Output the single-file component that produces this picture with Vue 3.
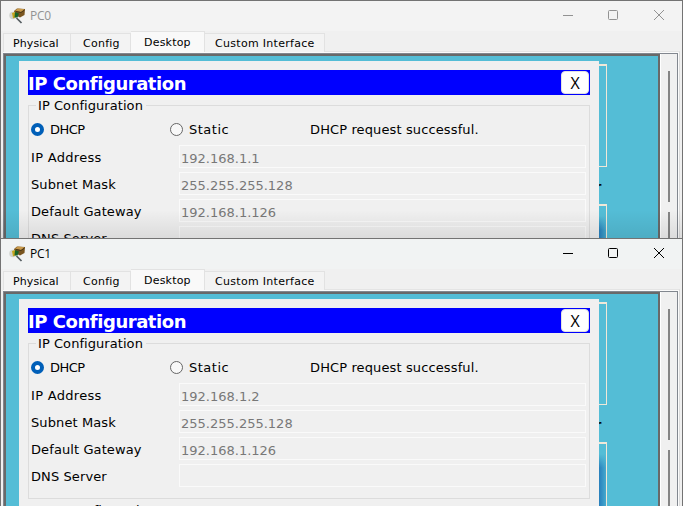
<script setup>
const windows = [
  { name: 'PC0', active: false, address: '192.168.1.1' },
  { name: 'PC1', active: true, address: '192.168.1.2' },
]
const tabs = ['Physical', 'Config', 'Desktop', 'Custom Interface']
const fields = (w) => [
  ['IP Address', w.address],
  ['Subnet Mask', '255.255.255.128'],
  ['Default Gateway', '192.168.1.126'],
  ['DNS Server', ''],
]
</script>

<template>
  <main class="screen">
    <section v-for="w in windows" :key="w.name" class="window" :class="{ active: w.active }">
      <header class="titlebar">
        <svg class="logo" width="18" height="18" viewBox="0 0 18 18">
          <path d="M5 4 8 1.5 16 2 15.5 8 11 10.5 6 8Z" fill="#79551f" />
          <path d="M6 3.5 9 1.5 15.5 2.3 12 5Z" fill="#c99a4c" />
          <path d="M7 4.5 12 5.5 15.5 3" stroke="#4a3818" fill="none" />
          <circle cx="4" cy="8.5" r="3.7" fill="#d0d3ce" />
          <path d="M3 6 6 5 7 10 4 11.5Z" fill="#c4a41c" />
          <path d="M6 5 10 6.5 8.5 10.5 5.5 10.5Z" fill="#176328" />
          <path d="M7.5 11 12.5 16" stroke="#555d60" stroke-width="1.7" />
        </svg>
        <span class="name">{{ w.name }}</span>
        <svg class="controls" width="104" height="12" viewBox="0 0 104 12" fill="none" stroke="currentColor">
          <path d="M1 6.5h10" />
          <rect x="46.5" y="1.5" width="9" height="9" rx="1" />
          <path d="M92 1 102 11M102 1 92 11" />
        </svg>
      </header>
      <nav class="tabs">
        <div v-for="t in tabs" :key="t" class="tab" :class="t.split(' ')[0].toLowerCase()"><span>{{ t }}</span></div>
      </nav>
      <div class="pane">
        <div class="frame">
          <div class="desktop">
            <div class="dialog">
              <div class="heading">
                <b>IP Configuration</b>
                <button>X</button>
              </div>
              <div class="group">
                <div class="legend"><i></i><span>IP Configuration</span><i class="rest"></i></div>
                <div class="body">
                  <div class="mode">
                    <span class="radio on"></span><span class="dhcp">DHCP</span>
                    <span class="radio"></span><span class="static">Static</span>
                    <span class="status">DHCP request successful.</span>
                  </div>
                  <div v-for="[label, value] in fields(w)" :key="label" class="row">
                    <label>{{ label }}</label>
                    <div class="field">{{ value }}</div>
                  </div>
                </div>
              </div>
              <div v-if="w.active" class="next">IPv6 Configuration</div>
            </div>
            <div class="scene">
              <div class="tile first"></div>
              <div class="caption"><span>r</span></div>
              <div class="tile second"></div>
            </div>
          </div>
          <div class="scroll"><div class="bar"></div><div class="bar lower"></div></div>
        </div>
      </div>
    </section>
  </main>
</template>

<style>
body { margin: 0; overflow: hidden; }
</style>

<style scoped>
* { box-sizing: border-box; }
.screen { width: 683px; height: 506px; overflow: hidden; font: 13px/16px "DejaVu Sans", sans-serif; color: #000; }
.window { width: 683px; height: 238px; overflow: hidden; background: #f0f0f0; border: 1px solid #737373; border-bottom: 0; position: relative; }
.window.active { height: 268px; }
.window:not(.active)::after { content: ""; position: absolute; inset: auto 0 0; height: 28px; background: linear-gradient(transparent, #00000016); }
.titlebar { height: 30px; background: #f3f3f3; display: flex; align-items: center; padding-left: 8px; color: #929292; }
.active .titlebar { background: #f1f3f3; color: #000; }
.logo { flex: none; margin-top: -1px; }
.name { margin-left: 3px; font: 12px/16px "Open Sans", sans-serif; letter-spacing: -.25px; }
.controls { margin-left: auto; margin-right: 16px; margin-top: -2px; }
.tabs { height: 21px; display: flex; align-items: flex-end; padding-left: 2px; font-size: 11px; letter-spacing: .12px; }
.tab { height: 19px; border: 1px solid #e2e2e2; border-bottom: 0; background: #f3f3f3; display: flex; align-items: center; padding-top: 2px; white-space: nowrap; }
.tab + .tab { border-left: 0; }
.physical { width: 68px; padding-left: 9px; }
.config { width: 60px; padding-left: 12px; letter-spacing: .25px; }
.desktop.tab { width: 74px; height: 21px; background: #f9f9f9; padding: 1px 0 0 13px; letter-spacing: .2px; }
.custom { width: 120px; padding-left: 10px; letter-spacing: .3px; }
.pane { width: 677px; height: 460px; margin-left: 2px; margin-top: -1px; border-top: 1px solid #e4e4e4; border-right: 1px solid #dcdcdc; padding: 1px 1px 0 0; background: #fbfbfb; }
.frame { width: 675px; height: 455px; border: 1px solid #82878f; background: #f0f0f0; display: flex; }
.desktop:not(.tab) { width: 656px; flex: none; height: 453px; border: 2px solid #696969; background: #54bdd6; display: flex; padding: 5px 0 0 13px; }
.dialog { width: 580px; flex: none; height: 450px; background: #f0f0f0; padding: 9px 9px 0; }
.heading { height: 25px; background: #00f; display: flex; align-items: center; justify-content: space-between; padding-right: 1px; color: #fff; }
.heading b { font: bold 18px/25px "DejaVu Sans", sans-serif; letter-spacing: -.45px; white-space: nowrap; padding-top: 1px; }
.heading button { width: 28px; height: 23px; padding: 1px 0 0; border: 1px solid #e2e2e2; border-radius: 4px; background: #fff; color: #000; font: 16px/20px "Open Sans", sans-serif; display: flex; justify-content: center; }
.group { margin-top: 2px; height: 164px; }
.legend { height: 16px; display: flex; align-items: center; gap: 2px; white-space: nowrap; }
.legend i { width: 8px; height: 1px; background: #dcdcdc; }
.legend .rest { flex: 1; }
.legend span { width: 106px; padding-top: 2px; letter-spacing: .06px; }
.body { height: 156px; margin-top: -8px; border: 1px solid #dcdcdc; border-top: 0; padding: 15px 3px 0 2px; }
.mode { height: 18px; display: flex; align-items: center; }
.mode span:not(.radio) { padding-top: 2px; }
.radio { width: 13px; height: 13px; flex: none; border: 1px solid #666; border-radius: 50%; background: #f8f8f8; }
.radio.on { border: 4px solid #005fb8; background: #fff; }
.dhcp { width: 126px; flex: none; padding-left: 6px; letter-spacing: -.5px; }
.static { width: 127px; flex: none; padding-left: 6px; letter-spacing: .5px; }
.status { white-space: nowrap; letter-spacing: .12px; }
.row { height: 23px; margin-bottom: 4px; display: flex; }
.mode + .row { margin-top: 7px; }
.row label { width: 148px; flex: none; padding-top: 5px; white-space: nowrap; letter-spacing: .1px; }
.mode + .row label { letter-spacing: .3px; }
.field { width: 408px; height: 23px; border: 1px solid #fafafa; padding: 5px 0 0 1px; color: #787878; }
.next { padding-left: 10px; margin-top: 4px; white-space: nowrap; letter-spacing: -.15px; }
.scene { width: 8px; padding-top: 3px; overflow: hidden; }
.tile { border: 1px solid #f0e8d8; border-left: 0; border-top-width: 2px; }
.first { height: 103px; }
.caption { height: 37px; padding-top: 12px; line-height: 16px; overflow: hidden; font-weight: bold; }
.caption span { margin-left: -4px; }
.second { height: 250px; background: linear-gradient(#54bdd6 10px, transparent 24px), linear-gradient(90deg, #277fbc, #45a9ce); }
.scroll { flex: 1; border-left: 1px solid #fff; padding: 17px 0 0 7px; }
.bar { width: 2px; height: 131px; background: #858585; }
.lower { height: 300px; margin-top: 10px; }
</style>
